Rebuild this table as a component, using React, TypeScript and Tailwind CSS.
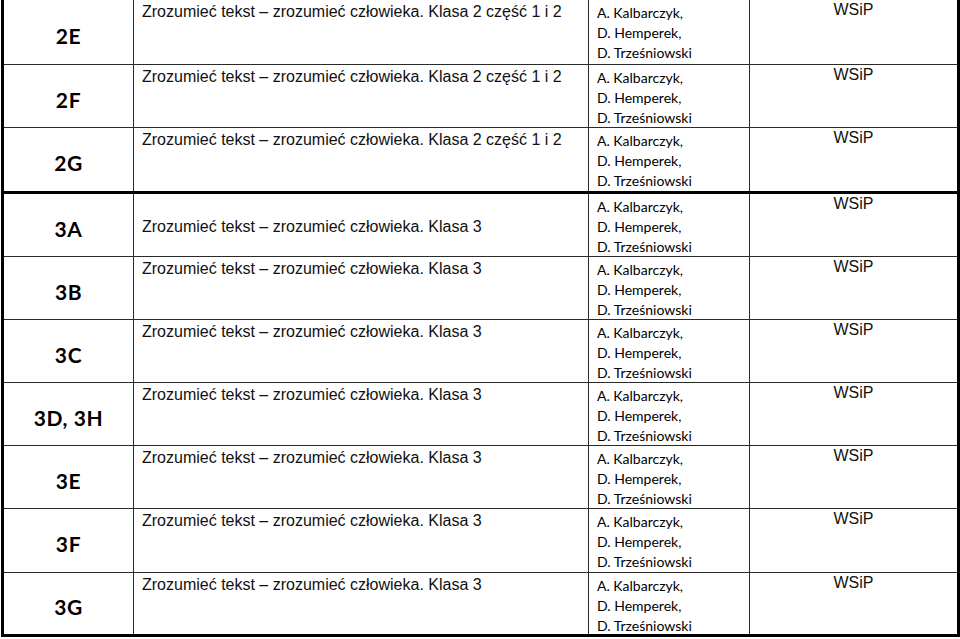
type Row = {
  label: string;
  title: string;
  height: string;
  thick?: boolean;
  centered?: boolean;
};

const T2 = 'Zrozumieć tekst – zrozumieć człowieka. Klasa 2 część 1 i 2';
const T3 = 'Zrozumieć tekst – zrozumieć człowieka. Klasa 3';

const rows: Row[] = [
  { label: '2E', title: T2, height: 'h-[65px]' },
  { label: '2F', title: T2, height: 'h-[63px]' },
  { label: '2G', title: T2, height: 'h-[66px]', thick: true },
  { label: '3A', title: T3, height: 'h-[63px]', centered: true },
  { label: '3B', title: T3, height: 'h-[63px]' },
  { label: '3C', title: T3, height: 'h-[63px]' },
  { label: '3D, 3H', title: T3, height: 'h-[63px]' },
  { label: '3E', title: T3, height: 'h-[63px]' },
  { label: '3F', title: T3, height: 'h-[64px]' },
  { label: '3G', title: T3, height: 'h-[61px]' },
];

const arial = "font-['Liberation_Sans',Arial,sans-serif]";
const calibri = "font-['Lato','Open_Sans',sans-serif]";

function TableRow({ row, last }: { row: Row; last: boolean }) {
  const bottom = last ? '' : row.thick ? 'border-b-[3px] border-black' : 'border-b border-[#2a2a2a]';

  return (
    <div className={`flex box-border ${row.height} ${bottom}`}>
      {/* class label */}
      <div className="w-[130px] shrink-0 border-r border-[#2a2a2a] flex items-center justify-center pt-[6px]">
        <span className={`${calibri} font-bold text-[21px] tracking-[0.6px] leading-none text-black`}>
          {row.label}
        </span>
      </div>

      {/* title */}
      <div
        className={`w-[455px] shrink-0 border-r border-[#2a2a2a] pl-[8px] flex ${
          row.centered ? 'items-center pt-[4px]' : 'items-start pt-[3px]'
        }`}
      >
        <span className={`${arial} text-[16px] leading-[18px] text-[#111]`}>{row.title}</span>
      </div>

      {/* authors */}
      <div
        className={`w-[161px] shrink-0 border-r border-[#2a2a2a] pl-[8px] pt-[3px] ${calibri} text-[14px] leading-[20px] text-black`}
      >
        <div>A. Kalbarczyk,</div>
        <div>D. Hemperek,</div>
        <div>D. Trześniowski</div>
      </div>

      {/* publisher */}
      <div className="flex-1 flex justify-center pt-[1px]">
        <span className={`${arial} text-[16px] leading-[18px] text-[#111]`}>WSiP</span>
      </div>
    </div>
  );
}

export default function App() {
  return (
    <div className="w-[960px] h-[639px] bg-white overflow-hidden">
      <div className="ml-[1px] w-[959px] box-border border-l-[3px] border-r-[3px] border-b-[3px] border-black">
        {rows.map((row, i) => (
          <TableRow key={row.label} row={row} last={i === rows.length - 1} />
        ))}
      </div>
    </div>
  );
}
